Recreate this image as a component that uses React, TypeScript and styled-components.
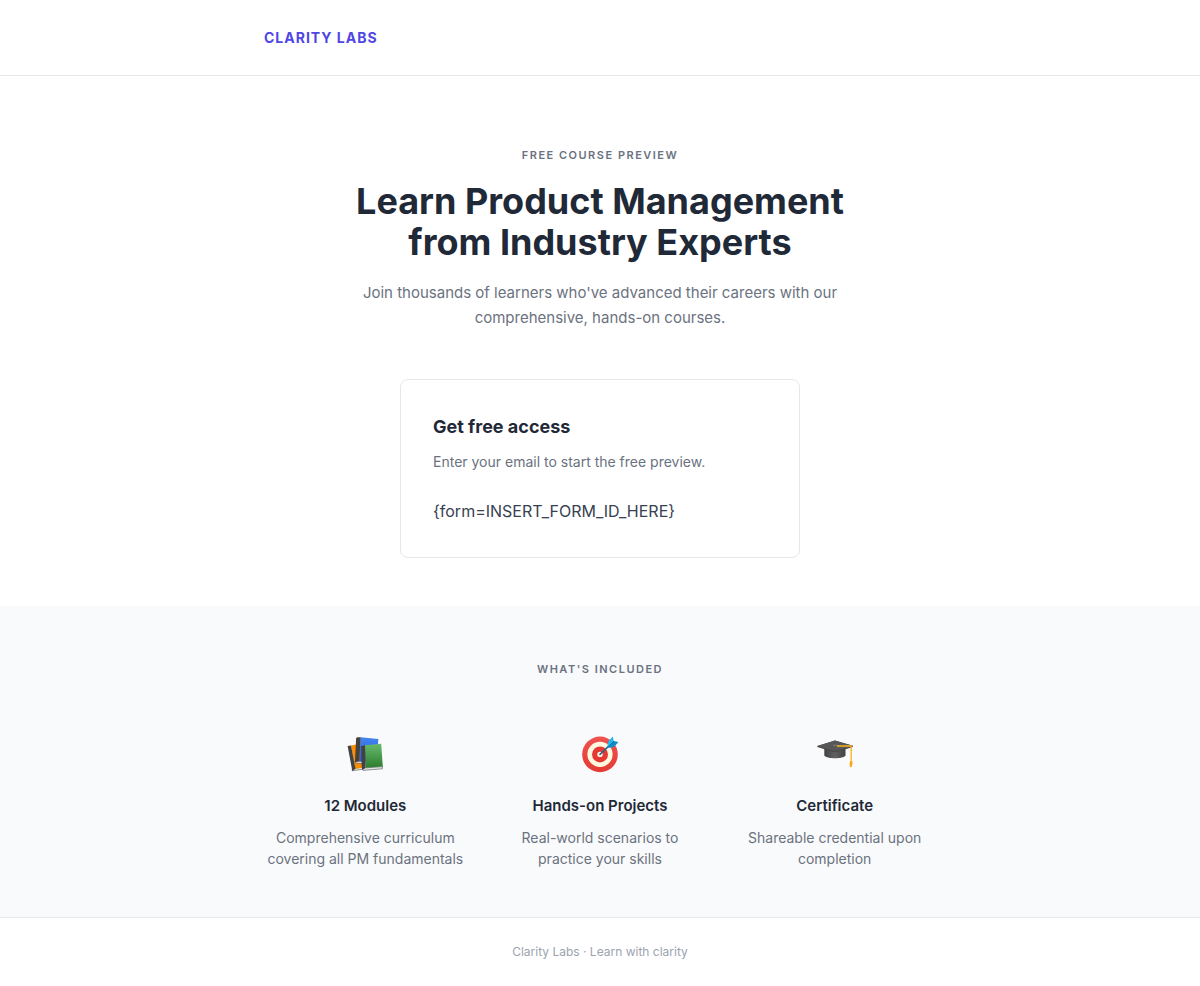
import React from "react";
import styled, { createGlobalStyle } from "styled-components";

const Global = createGlobalStyle`
  *, *::before, *::after { box-sizing: border-box; }
  body { margin: 0; background: #fff; color: #374151; font-family: Inter, "Liberation Sans", sans-serif; font-size: 16px; line-height: 27px; }
  h1, h2, h3, p { margin: 0; }
`;

const Header = styled.header`
  padding: 24px;
  border-bottom: 1px solid #e5e7eb;
`;
const Brand = styled.div`
  max-width: 672px;
  margin: 0 auto;
  color: #4f46e5;
  font-size: 14px;
  font-weight: 700;
  letter-spacing: 1px;
`;
const Hero = styled.section`
  padding: 69px 24px 48px;
  text-align: center;
`;
const Eyebrow = styled.p`
  color: #6b7280;
  font-size: 11px;
  line-height: 20px;
  font-weight: 600;
  letter-spacing: 1.5px;
`;
const Title = styled.h1`
  max-width: 560px;
  margin: 16px auto 17px;
  color: #1f2937;
  font-size: 36px;
  line-height: 41px;
  font-weight: 700;
`;
const Lead = styled.p`
  max-width: 480px;
  margin: 0 auto;
  color: #6b7280;
  font-size: 15px;
  line-height: 25px;
`;
const Card = styled.div`
  max-width: 400px;
  margin: 49px auto 0;
  padding: 32px;
  border: 1px solid #e5e7eb;
  border-radius: 8px;
  text-align: left;
`;
const CardTitle = styled.h2`
  color: #1f2937;
  font-size: 18px;
  line-height: 30px;
  font-weight: 700;
`;
const CardText = styled.p`
  margin: 8px 0 24px;
  color: #6b7280;
  font-size: 14px;
  line-height: 24px;
`;
const Features = styled.section`
  padding: 53px 24px 48px;
  background: #f9fafb;
  text-align: center;
`;
const Grid = styled.div`
  display: grid;
  grid-template-columns: repeat(3, 1fr);
  gap: 32px;
  max-width: 672px;
  margin: 56px auto 0;
`;
const Icon = styled.svg`
  display: block;
  width: 40px;
  height: 40px;
  margin: 0 auto;
`;
const FeatureTitle = styled.h3`
  margin: 18px 0 8px;
  color: #1f2937;
  font-size: 15px;
  line-height: 26px;
  font-weight: 600;
`;
const FeatureText = styled.p`
  color: #6b7280;
  font-size: 14px;
  line-height: 21px;
`;
const Footer = styled.footer`
  padding: 24px;
  border-top: 1px solid #e5e7eb;
  color: #9ca3af;
  font-size: 12px;
  line-height: 20px;
  text-align: center;
`;

const Books = () => (
  <Icon viewBox="0 0 40 40" aria-hidden="true">
    <defs>
      <linearGradient id="green" x1="0" y1="0" x2="0" y2="1">
        <stop offset="0" stopColor="#66bb6a" />
        <stop offset="1" stopColor="#2e7d32" />
      </linearGradient>
      <linearGradient id="blue" x1="0" y1="0" x2="0" y2="1">
        <stop offset="0" stopColor="#4285f4" />
        <stop offset="1" stopColor="#2f56c6" />
      </linearGradient>
    </defs>
    <path d="M7.3 35.8 17.8 34.2 17.8 32 7.3 33.5Z" fill="#e4e4e4" stroke="#555" strokeWidth=".6" />
    <path d="M6 10.4 14 9 18 32.5 10.2 34Z" fill="#fb8c00" />
    <path d="M2.6 11.1 6 10.4 10.5 33.8 7.3 36Z" fill="#424242" />
    <path d="M10.4 25.8 31 27.5V29.5L10.4 28Z" fill="#e4e4e4" stroke="#555" strokeWidth=".6" />
    <path d="M15.5 2.3 33.3 4.1 32 27.5 14.3 26.2Z" fill="url(#blue)" />
    <path d="M12 2.2 15.7 2.3 14.3 26.2 10 27.2 11.1 3.4Z" fill="#424242" />
    <path d="M17.2 33.1 37.6 31.6 37.4 33.8 18 35.4Z" fill="#e4e4e4" stroke="#555" strokeWidth=".6" />
    <path d="M20 10.3 36.2 8.8 37.8 31.6 20.6 32.8Z" fill="url(#green)" />
    <path d="M16.1 10.9 20 10.3 20.6 32.8 17.4 35 16.7 32Z" fill="#424242" />
  </Icon>
);

const Target = () => (
  <Icon viewBox="0 0 40 40" aria-hidden="true">
    <defs>
      <linearGradient id="red" x1="0" y1="0" x2="0" y2="1">
        <stop offset="0" stopColor="#ef5350" />
        <stop offset="1" stopColor="#e53935" />
      </linearGradient>
    </defs>
    <circle cx="20" cy="19.4" r="17.8" fill="url(#red)" />
    <circle cx="20" cy="19.4" r="12.6" fill="#fff8e1" />
    <circle cx="20" cy="19.4" r="8" fill="#e53935" />
    <circle cx="20" cy="19.4" r="2.7" fill="#fff8e1" />
    <path d="M20 19.4 30 9.8" stroke="#35637d" strokeWidth="1.6" strokeLinecap="round" />
    <path d="M27.5 12.2 28 6.5 32.8 1.5 33.8 6.3 38.2 7 34 12 28.2 13Z" fill="#29b6e8" />
    <path d="M27.5 12.5 33.8 6.3 38.2 7 34 12Z" fill="#168bc2" />
    <path d="M27 13 34 6.1" stroke="#0277a8" strokeWidth=".9" />
  </Icon>
);

const Cap = () => (
  <Icon viewBox="0 0 40 40" aria-hidden="true">
    <defs>
      <linearGradient id="cap" x1="0" y1="0" x2="1" y2="0">
        <stop offset="0" stopColor="#424242" />
        <stop offset=".5" stopColor="#616161" />
        <stop offset="1" stopColor="#424242" />
      </linearGradient>
    </defs>
    <path d="M9.3 13H30.5V20.5C28 24.2 12 24.2 9.3 20.5Z" fill="url(#cap)" />
    <path d="M2.3 11 20 5.6 37.8 10.8V12L21 17.2Q20 17.5 19 17.2L2.3 12Z" fill="#4b4b4b" />
    <path d="M2.3 11 20 5.6 37.8 10.8 20 16Z" fill="#575757" />
    <ellipse cx="20" cy="10.3" rx="2.3" ry=".9" fill="#757575" />
    <path d="M22 11H36.2V27" fill="none" stroke="#fbb117" strokeWidth="1.3" strokeLinejoin="round" />
    <path d="M35.2 26H37.2L37.6 28.5 36.7 32 34.8 32 34.6 28.5Z" fill="#f9a825" />
  </Icon>
);

const features = [
  { Picture: Books, title: "12 Modules", text: "Comprehensive curriculum covering all PM fundamentals" },
  { Picture: Target, title: "Hands-on Projects", text: "Real-world scenarios to practice your skills" },
  { Picture: Cap, title: "Certificate", text: "Shareable credential upon completion" },
];

export default function App() {
  return (
    <>
      <Global />
      <Header><Brand>CLARITY LABS</Brand></Header>
      <main>
        <Hero>
          <Eyebrow>FREE COURSE PREVIEW</Eyebrow>
          <Title>Learn Product Management from Industry Experts</Title>
          <Lead>Join thousands of learners who've advanced their careers with our comprehensive, hands-on courses.</Lead>
          <Card>
            <CardTitle>Get free access</CardTitle>
            <CardText>Enter your email to start the free preview.</CardText>
            <p>{"{form=INSERT_FORM_ID_HERE}"}</p>
          </Card>
        </Hero>
        <Features>
          <Eyebrow as="h2">WHAT'S INCLUDED</Eyebrow>
          <Grid>
            {features.map(({ Picture, title, text }) => (
              <div key={title}>
                <Picture />
                <FeatureTitle>{title}</FeatureTitle>
                <FeatureText>{text}</FeatureText>
              </div>
            ))}
          </Grid>
        </Features>
      </main>
      <Footer>Clarity Labs · Learn with clarity</Footer>
    </>
  );
}
